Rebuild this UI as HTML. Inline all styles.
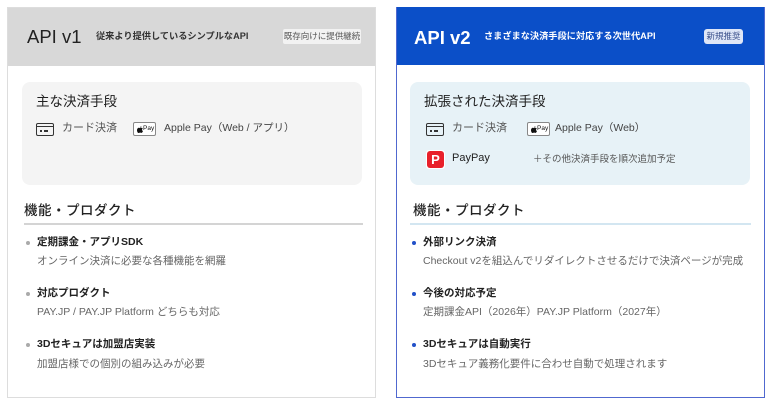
<!DOCTYPE html>
<html><head><meta charset="utf-8"><style>
*{margin:0;padding:0;box-sizing:border-box}
body{width:780px;height:405px;background:#fff;font-family:"Liberation Sans","Noto Sans CJK JP",sans-serif;position:relative;overflow:hidden;color:#222}
.a{position:absolute;white-space:nowrap;line-height:1}
.card{position:absolute;top:7px;width:369px;height:391px}
.hd{position:absolute;left:0;top:0;right:0;height:58px}
.box{position:absolute;left:14px;top:74px;width:340px;height:103px;border-radius:8px}
.ci{position:absolute;width:18px;height:13px;border:1.8px solid #333;border-radius:2px}
.ci:before{content:"";position:absolute;left:0;right:0;top:2px;border-top:1.6px solid #333}
.ci:after{content:"";position:absolute;left:3px;top:6px;width:2px;height:1.6px;background:#333;box-shadow:4px 0 #333,6px 0 #333}
.ap{position:absolute;width:23px;height:14px;border:1px solid #888;border-radius:2px;background:#fff;font-size:6px;color:#111}
.ap span{position:absolute;left:9px;top:3px;font-size:6.5px;line-height:1}
.ap svg{position:absolute;left:3px;top:3px}
.m{font-size:11px;color:#555}
.st{font-size:13.5px;font-weight:500;color:#222;letter-spacing:0.5px}
.b{font-size:10.5px;font-weight:bold;color:#222}
.d{font-size:10.5px;color:#666}
.dot{position:absolute;width:4px;height:4px;border-radius:50%}
</style></head><body>
<div class="card" style="left:7px;border:1px solid #ddd">
 <div class="hd" style="background:#d8d8d8"></div>
 <div class="a" style="left:19px;top:20px;font-size:18.5px;font-weight:500;color:#222">API v1</div>
 <div class="a" style="left:88px;top:24px;font-size:9.2px;font-weight:bold;color:#333">従来より提供しているシンプルなAPI</div>
 <div class="a" style="left:275px;top:21px;width:78px;height:15px;background:#f2f2f2;border-radius:2px;font-size:8.5px;color:#555;text-align:center;line-height:15px">既存向けに提供継続</div>
 <div class="box" style="background:#f4f4f4"></div>
 <div class="a" style="left:28px;top:87px;font-size:13.5px;color:#222">主な決済手段</div>
 <div class="ci" style="left:28px;top:115px"></div>
 <div class="a m" style="left:54px;top:115px">カード決済</div>
 <div class="ap" style="left:125px;top:114px"><svg width="6" height="7" viewBox="0 0 6 7"><path d="M3 1.6C3.2.6 4 .2 4.4.2 4.4 1 3.8 1.6 3 1.6ZM3 2.1c.6 0 1-.4 1.6-.3.5.1.9.4 1.1.8-1 .6-.8 2 .3 2.4-.3.9-.9 1.9-1.5 1.9-.5 0-.7-.3-1.5-.3S2 7 1.5 7C.8 7 0 5.6 0 4.3 0 2.9.9 1.8 1.8 1.8c.5 0 .8.3 1.2.3Z" fill="#111"/></svg><span>Pay</span></div>
 <div class="a m" style="left:156px;top:115px;font-size:10.5px;color:#444">Apple Pay（Web / アプリ）</div>
 <div class="a st" style="left:16px;top:196px">機能・プロダクト</div>
 <div class="a" style="left:16px;top:215px;width:339px;height:2px;background:#d4d4d4"></div>
 <div class="dot" style="left:18px;top:233px;background:#aaa"></div>
 <div class="a b" style="left:29px;top:229px">定期課金・アプリSDK</div>
 <div class="a d" style="left:29px;top:248px">オンライン決済に必要な各種機能を網羅</div>
 <div class="dot" style="left:18px;top:284px;background:#aaa"></div>
 <div class="a b" style="left:29px;top:280px">対応プロダクト</div>
 <div class="a d" style="left:29px;top:299px">PAY.JP / PAY.JP Platform どちらも対応</div>
 <div class="dot" style="left:18px;top:335px;background:#aaa"></div>
 <div class="a b" style="left:29px;top:331px">3Dセキュアは加盟店実装</div>
 <div class="a d" style="left:29px;top:351px">加盟店様での個別の組み込みが必要</div>
</div>
<div class="card" style="left:396px;border:1.5px solid #5068cf">
 <div class="hd" style="background:#0b4fc8;top:-1px"></div>
 <div class="a" style="left:17px;top:21px;font-size:18.5px;font-weight:bold;color:#fff">API v2</div>
 <div class="a" style="left:87px;top:24px;font-size:9.2px;font-weight:bold;color:#fff">さまざまな決済手段に対応する次世代API</div>
 <div class="a" style="left:307px;top:21px;width:39px;height:15px;background:#dfe6f7;border-radius:3px;font-size:8.5px;color:#3a4f8a;text-align:center;line-height:15px">新規推奨</div>
 <div class="box" style="background:#e7f2f7;left:13px"></div>
 <div class="a" style="left:27px;top:87px;font-size:13.5px;color:#222">拡張された決済手段</div>
 <div class="ci" style="left:29px;top:115px"></div>
 <div class="a m" style="left:55px;top:115px">カード決済</div>
 <div class="ap" style="left:130px;top:114px"><svg width="6" height="7" viewBox="0 0 6 7"><path d="M3 1.6C3.2.6 4 .2 4.4.2 4.4 1 3.8 1.6 3 1.6ZM3 2.1c.6 0 1-.4 1.6-.3.5.1.9.4 1.1.8-1 .6-.8 2 .3 2.4-.3.9-.9 1.9-1.5 1.9-.5 0-.7-.3-1.5-.3S2 7 1.5 7C.8 7 0 5.6 0 4.3 0 2.9.9 1.8 1.8 1.8c.5 0 .8.3 1.2.3Z" fill="#111"/></svg><span>Pay</span></div>
 <div class="a m" style="left:158px;top:115px;font-size:10.5px;color:#444">Apple Pay（Web）</div>
 <div class="a" style="left:29px;top:142px;width:19px;height:19px;background:#fff;border-radius:3px"><div style="position:absolute;left:1px;top:1px;width:17px;height:17px;background:#e8202a;border-radius:3px;color:#fff;font-size:13px;font-weight:bold;text-align:center;line-height:17px">P</div></div>
 <div class="a" style="left:55px;top:145px;font-size:11px;color:#222">PayPay</div>
 <div class="a" style="left:136px;top:147px;font-size:9.5px;color:#555">＋その他決済手段を順次追加予定</div>
 <div class="a st" style="left:16px;top:196px">機能・プロダクト</div>
 <div class="a" style="left:13px;top:215px;width:341px;height:2px;background:#d3e6f1"></div>
 <div class="dot" style="left:15px;top:233px;background:#2250c8"></div>
 <div class="a b" style="left:26px;top:229px">外部リンク決済</div>
 <div class="a d" style="left:26px;top:248px">Checkout v2を組込んでリダイレクトさせるだけで決済ページが完成</div>
 <div class="dot" style="left:15px;top:284px;background:#2250c8"></div>
 <div class="a b" style="left:26px;top:280px">今後の対応予定</div>
 <div class="a d" style="left:26px;top:299px">定期課金API（2026年）PAY.JP Platform（2027年）</div>
 <div class="dot" style="left:15px;top:335px;background:#2250c8"></div>
 <div class="a b" style="left:26px;top:331px">3Dセキュアは自動実行</div>
 <div class="a d" style="left:26px;top:351px">3Dセキュア義務化要件に合わせ自動で処理されます</div>
</div>
</body></html>
